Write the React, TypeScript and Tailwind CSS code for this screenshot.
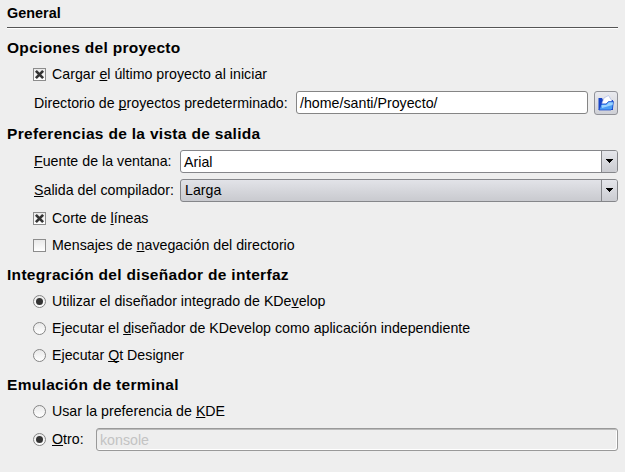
import type { ReactNode } from "react";

function Key({ children }: { children: ReactNode }) {
  return <span className="underline decoration-1 underline-offset-1 [text-decoration-skip-ink:none]">{children}</span>;
}

function Heading({ children, className }: { children: ReactNode; className: string }) {
  return (
    <h2 className={`flex h-5 items-center whitespace-nowrap pl-[7px] text-[15.5px] font-bold leading-5 tracking-[0.31px] ${className}`}>
      <span>{children}</span>
    </h2>
  );
}

function Check({ checked }: { checked?: boolean }) {
  return (
    <span className="h-[13px] w-[13px] shrink-0 border border-[#8c8c8c] bg-linear-to-b from-[#e9e9e9] to-white">
      {checked && (
        <svg viewBox="0 0 11 11" className="block h-[11px] w-[11px]">
          <path d="M1.9 1.9L9.1 9.1M9.1 1.9L1.9 9.1" stroke="#333" strokeWidth="2.7" />
        </svg>
      )}
    </span>
  );
}

function Radio({ checked }: { checked?: boolean }) {
  return (
    <span className="flex h-[13px] w-[13px] shrink-0 items-center justify-center rounded-full border border-[#858585] bg-linear-to-b from-[#e9e9e9] to-white">
      {checked && <span className="h-[7px] w-[7px] rounded-full bg-[#333]" />}
    </span>
  );
}

function Option({ control, children, className }: { control: ReactNode; children: ReactNode; className: string }) {
  return (
    <label className={`flex h-[13px] items-center whitespace-nowrap pl-[33px] ${className}`}>
      {control}
      <span className="ml-1.5 pb-0.5">{children}</span>
    </label>
  );
}

function Combo({ value, filled }: { value: string; filled?: boolean }) {
  return (
    <div className={`flex h-[23px] w-[438px] shrink-0 overflow-hidden rounded-[3px] border border-[#85868a] ${filled ? "bg-linear-to-b from-[#e2e3e8] to-[#c9cacf]" : "bg-white"}`}>
      <span className={`flex-1 leading-[21px] ${filled ? "pl-1" : "pl-[3px] pt-px"}`}>{value}</span>
      <span className="flex w-4 items-center justify-center border-l border-[#85868a] bg-linear-to-b from-[#e5e6eb] to-[#cbccd1] pb-px">
        <svg viewBox="0 0 7 4" className="h-1 w-[7px]" shapeRendering="crispEdges">
          <path d="M0 0H7V1H6V2H5V3H4V4H3V3H2V2H1V1H0Z" fill="#000" />
        </svg>
      </span>
    </div>
  );
}

export default function App() {
  return (
    <main className="h-[472px] w-[625px] overflow-hidden bg-[#eeeeee] font-['Liberation_Sans',Arial,sans-serif] text-[14.2px] leading-5 tracking-[0.015px] text-black">
      <h1 className="h-[27px] pl-[7px] text-[14.4px] font-bold leading-[26px]">General</h1>
      <div className="ml-[7px] h-0.5 w-[611px] border-b border-t border-b-white border-t-[#555]" />

      <Heading className="mt-[9px]">Opciones del proyecto</Heading>
      <Option className="mt-[10px]" control={<Check checked />}>
        Cargar <Key>e</Key>l último proyecto al iniciar
      </Option>
      <div className="mt-[10px] flex h-[23px] items-center whitespace-nowrap pl-[34px]">
        <span className="w-[262px]">Directorio de <Key>p</Key>royectos predeterminado:</span>
        <span className="h-[23px] w-[292px] rounded-[3px] border border-[#858585] bg-white pl-[3px] leading-[22px]">/home/santi/Proyecto/</span>
        <button className="ml-1.5 flex h-6 w-6 items-center justify-center rounded-[3px] border border-[#919298] bg-linear-to-b from-[#e9eaef] to-[#cfd0d6]">
          <svg viewBox="0 0 18 18" className="h-[18px] w-[18px]">
            <path d="M1.5 4H5L6 6H16V16H1.5Z" fill="#1744c8" />
            <path d="M5 9L7 4L11.5 1.5L15 7L14 10H5Z" fill="#fff" stroke="#9eaee5" strokeWidth=".6" />
            <path d="M2 16L4.5 10H9L11.5 7.5H16.5L15.5 14.5L14 16Z" fill="#4a9df5" stroke="#1744c8" strokeWidth=".7" />
            <path d="M4.5 11L9.5 11L12 8.5H16L15.5 11L5 14Z" fill="#9bd3ff" />
          </svg>
        </button>
      </div>

      <Heading className="mt-[10px]">Preferencias de la vista de salida</Heading>
      <div className="mt-1.5 flex h-[23px] items-center whitespace-nowrap pl-[34px]">
        <span className="w-[146px] pb-0.5"><Key>F</Key>uente de la ventana:</span>
        <Combo value="Arial" />
      </div>
      <div className="mt-1.5 flex h-[23px] items-center whitespace-nowrap pl-[34px]">
        <span className="w-[146px] pb-0.5"><Key>S</Key>alida del compilador:</span>
        <Combo value="Larga" filled />
      </div>
      <Option className="mt-[10px]" control={<Check checked />}>Corte de <Key>l</Key>íneas</Option>
      <Option className="mt-[14px]" control={<Check />}>Mensajes de <Key>n</Key>avegación del directorio</Option>

      <Heading className="mt-[13px]">Integración del diseñador de interfaz</Heading>
      <Option className="mt-[10px]" control={<Radio checked />}>Utilizar el diseñador integrado de KDe<Key>v</Key>elop</Option>
      <Option className="mt-[14px]" control={<Radio />}>Ejecutar el <Key>d</Key>iseñador de KDevelop como aplicación independiente</Option>
      <Option className="mt-[14px]" control={<Radio />}>Ejecutar <Key>Q</Key>t Designer</Option>

      <Heading className="mt-[13px]">Emulación de terminal</Heading>
      <Option className="mt-[10px]" control={<Radio />}>Usar la preferencia de <Key>K</Key>DE</Option>
      <div className="mt-[10px] flex h-[23px] items-center whitespace-nowrap pl-[33px]">
        <Radio checked />
        <span className="ml-1.5 w-11 pb-0.5"><Key>O</Key>tro:</span>
        <span className="h-[23px] w-[522px] rounded-[3px] border border-[#999] pl-[3px] leading-[22px] text-[#c3c3c3] shadow-[inset_-1px_-1px_0_#fff,inset_0_1px_0_#bbb]">konsole</span>
      </div>
    </main>
  );
}
